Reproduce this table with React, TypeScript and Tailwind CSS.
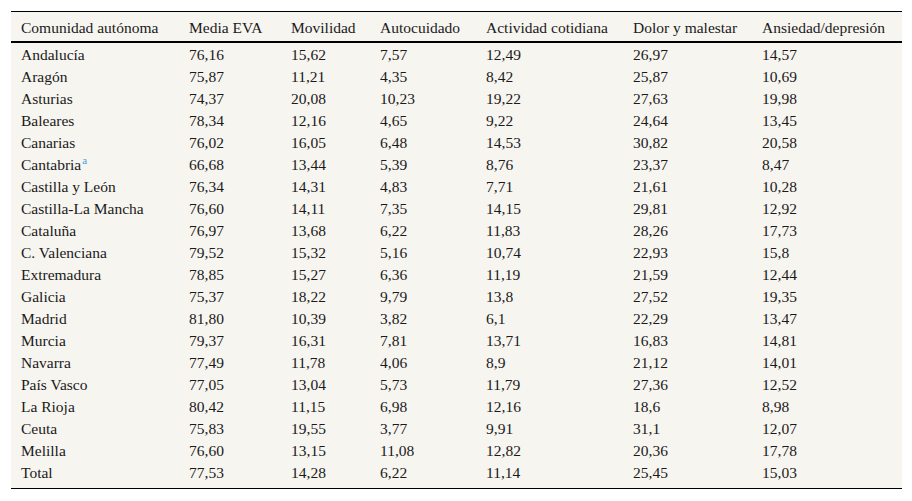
import React from "react";

const rows: [string, string, string, string, string, string, string, boolean?][] = [
  ["Andalucía", "76,16", "15,62", "7,57", "12,49", "26,97", "14,57"],
  ["Aragón", "75,87", "11,21", "4,35", "8,42", "25,87", "10,69"],
  ["Asturias", "74,37", "20,08", "10,23", "19,22", "27,63", "19,98"],
  ["Baleares", "78,34", "12,16", "4,65", "9,22", "24,64", "13,45"],
  ["Canarias", "76,02", "16,05", "6,48", "14,53", "30,82", "20,58"],
  ["Cantabria", "66,68", "13,44", "5,39", "8,76", "23,37", "8,47", true],
  ["Castilla y León", "76,34", "14,31", "4,83", "7,71", "21,61", "10,28"],
  ["Castilla-La Mancha", "76,60", "14,11", "7,35", "14,15", "29,81", "12,92"],
  ["Cataluña", "76,97", "13,68", "6,22", "11,83", "28,26", "17,73"],
  ["C. Valenciana", "79,52", "15,32", "5,16", "10,74", "22,93", "15,8"],
  ["Extremadura", "78,85", "15,27", "6,36", "11,19", "21,59", "12,44"],
  ["Galicia", "75,37", "18,22", "9,79", "13,8", "27,52", "19,35"],
  ["Madrid", "81,80", "10,39", "3,82", "6,1", "22,29", "13,47"],
  ["Murcia", "79,37", "16,31", "7,81", "13,71", "16,83", "14,81"],
  ["Navarra", "77,49", "11,78", "4,06", "8,9", "21,12", "14,01"],
  ["País Vasco", "77,05", "13,04", "5,73", "11,79", "27,36", "12,52"],
  ["La Rioja", "80,42", "11,15", "6,98", "12,16", "18,6", "8,98"],
  ["Ceuta", "75,83", "19,55", "3,77", "9,91", "31,1", "12,07"],
  ["Melilla", "76,60", "13,15", "11,08", "12,82", "20,36", "17,78"],
  ["Total", "77,53", "14,28", "6,22", "11,14", "25,45", "15,03"],
];

const headers = [
  "Comunidad autónoma",
  "Media EVA",
  "Movilidad",
  "Autocuidado",
  "Actividad cotidiana",
  "Dolor y malestar",
  "Ansiedad/depresión",
];

const widths = ["w-[168px]", "w-[102px]", "w-[89px]", "w-[106px]", "w-[147px]", "w-[129px]", "w-[150px]"];

export default function App() {
  return (
    <div className="w-[912px] h-[501px] bg-white pt-[11px] pl-[11px] text-[#1a1a1a] text-[15.5px] leading-none" style={{ fontFamily: '"Liberation Serif", "Times New Roman", serif' }}>
      <div className="w-[891px] bg-[#f7f5f0] border-t border-b border-black pb-[5px]">
        <div className="flex h-[31px] items-center pt-[2px] border-b-[2px] border-black">
          {headers.map((h, i) => (
            <div key={h} className={`${widths[i]} pl-[10px] whitespace-nowrap`}>{h}</div>
          ))}
        </div>
        {rows.map((r) => (
          <div key={r[0]} className="flex h-[22px] items-center pt-[2px]">
            {r.slice(0, 7).map((c, i) => (
              <div key={i} className={`${widths[i]} pl-[10px] whitespace-nowrap`}>
                {c as string}
                {i === 0 && r[7] ? (
                  <span className="text-[11px] text-[#4a9fd8] relative -top-[6px] ml-[1px]">a</span>
                ) : null}
              </div>
            ))}
          </div>
        ))}
      </div>
    </div>
  );
}
